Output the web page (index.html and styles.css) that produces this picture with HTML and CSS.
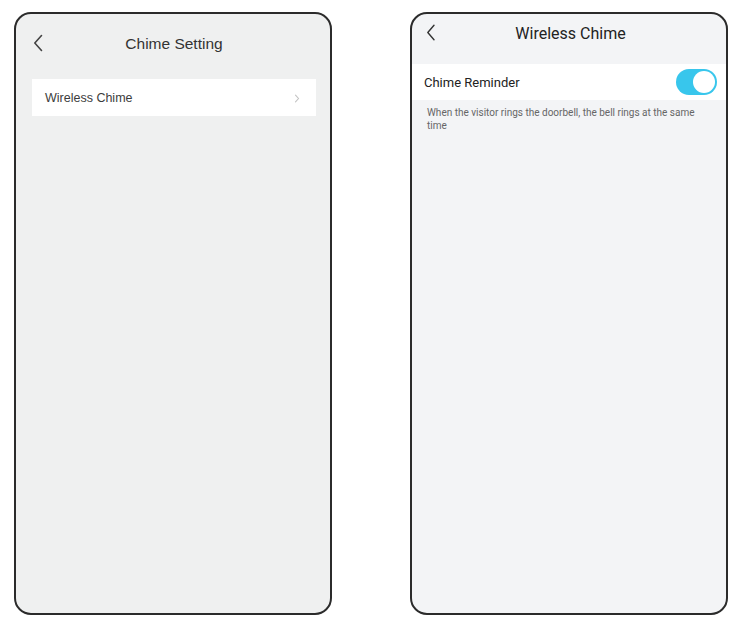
FILE: index.html
```html
<!DOCTYPE html>
<html>
<head>
<meta charset="utf-8">
<link rel="stylesheet" href="styles.css">
</head>
<body>
<div class="stage">
  <div class="phone phone-a">
    <div class="hdr-a">
      <svg class="back-a" width="10" height="18" viewBox="0 0 10 18"><path d="M8.5 1.5 L1.8 9 L8.5 16.5" fill="none" stroke="#444" stroke-width="1.6" stroke-linecap="round" stroke-linejoin="round"/></svg>
      <div class="title-a">Chime Setting</div>
    </div>
    <div class="list-a">
      <div class="card-a">
        <span class="card-text">Wireless Chime</span>
        <svg class="chev" width="6" height="9" viewBox="0 0 6 9"><path d="M1.5 1.2 L4.5 4.5 L1.5 7.8" fill="none" stroke="#c4c4c4" stroke-width="1.1" stroke-linecap="round"/></svg>
      </div>
    </div>
  </div>
  <div class="phone phone-b">
    <div class="hdr-b">
      <svg class="back-b" width="10" height="17" viewBox="0 0 10 17"><path d="M8 1.2 L1.8 8.5 L8 15.8" fill="none" stroke="#333" stroke-width="1.4" stroke-linecap="round" stroke-linejoin="round"/></svg>
      <div class="title-b">Wireless Chime</div>
    </div>
    <div class="row-b">
      <span class="row-text">Chime Reminder</span>
      <div class="toggle"><div class="knob"></div></div>
    </div>
    <div class="desc">When the visitor rings the doorbell, the bell rings at the same time</div>
  </div>
</div>
</body>
</html>
```
FILE: styles.css
```css
html, body {
  margin: 0;
  padding: 0;
  background: #ffffff;
}
.stage {
  display: flex;
  padding: 12px 0 0 14px;
  gap: 78px;
}
.phone {
  box-sizing: border-box;
  width: 318px;
  height: 603px;
  border: 2px solid #2b2b2b;
  border-radius: 17px;
  overflow: hidden;
  display: flex;
  flex-direction: column;
}
.phone-a {
  background: #eff0f0;
  font-family: "Liberation Sans", Arial, sans-serif;
}
.phone-b {
  background: #f3f4f6;
  font-family: Roboto, "Liberation Sans", sans-serif;
}
.hdr-a {
  position: relative;
  height: 58px;
  display: flex;
  align-items: center;
  justify-content: center;
}
.back-a {
  position: absolute;
  left: 17px;
  top: 20px;
}
.title-a {
  font-size: 15.5px;
  color: #333;
  margin-top: 1px;
  margin-left: 2px;
}
.list-a {
  padding: 7px 14px 0 16px;
}
.card-a {
  height: 37px;
  background: #ffffff;
  display: flex;
  align-items: center;
  justify-content: space-between;
  padding: 0 16px 0 13px;
}
.card-text {
  font-size: 12.5px;
  color: #3c3c3c;
}
.chev {
  margin-top: 1px;
}
.hdr-b {
  position: relative;
  height: 38px;
  display: flex;
  align-items: center;
  justify-content: center;
  margin-bottom: 12px;
}
.back-b {
  position: absolute;
  left: 14px;
  top: 10px;
}
.title-b {
  font-size: 16px;
  color: #222;
  margin-top: 1px;
  margin-left: 3px;
}
.row-b {
  height: 36px;
  background: #ffffff;
  display: flex;
  align-items: center;
  justify-content: space-between;
  padding: 0 9px 0 12px;
}
.row-text {
  font-size: 13px;
  color: #222;
}
.toggle {
  box-sizing: border-box;
  width: 41px;
  height: 26px;
  border-radius: 13px;
  background: #38c6ec;
  padding: 2px;
  display: flex;
  justify-content: flex-end;
}
.knob {
  width: 22px;
  height: 22px;
  border-radius: 50%;
  background: #ffffff;
}
.desc {
  padding: 6px 12px 0 15px;
  font-size: 10px;
  line-height: 13px;
  color: #666;
}
```
